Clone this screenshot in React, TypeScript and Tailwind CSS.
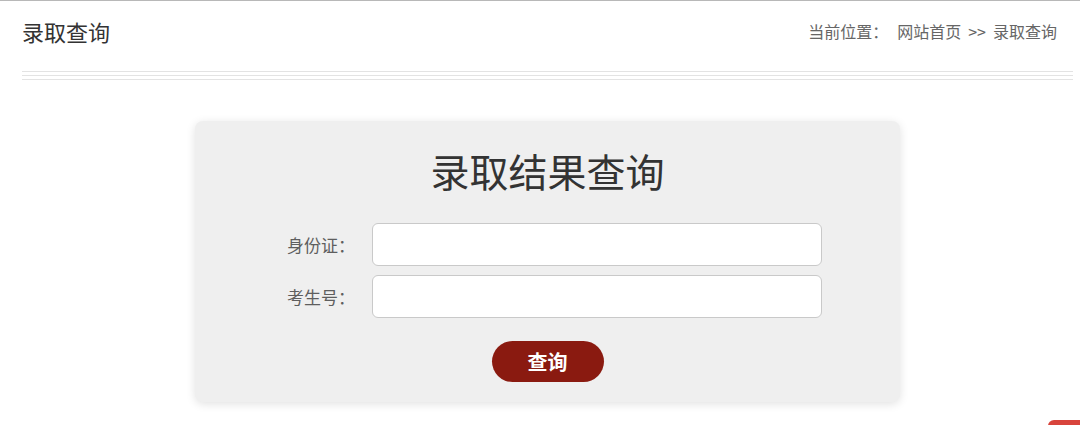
const font = { fontFamily: '"Noto Sans CJK SC", "Noto Sans", sans-serif' };

const Field = ({ label }: { label: string }) => (
  <div className="flex w-full items-center">
    <label className="w-[160px] text-right text-[17px] text-[#5e5e5e]">{label}</label>
    <input
      className="ml-[17px] h-[43px] w-[450px] rounded-[6px] border border-[#c9c9c9] bg-white px-3 outline-none"
      type="text"
    />
  </div>
);

export default function App() {
  return (
    <div
      className="relative h-[425px] w-[1080px] overflow-hidden border-t border-[#b8b8b8] bg-white"
      style={font}
    >
      <div className="ml-[22px] mr-[7px]">
        <div className="flex h-[70px] items-center justify-between pb-[10px]">
          <h1 className="text-[22px] text-[#333]">录取查询</h1>
          <div className="mr-[16px] flex text-[16px] text-[#666]">
            <span>当前位置：</span>
            <span className="ml-[9px]">网站首页</span>
            <span className="mx-[7px]">&gt;&gt;</span>
            <span>录取查询</span>
          </div>
        </div>

        <div className="flex flex-col gap-[3px]">
          <div className="h-px bg-[#e3e3e3]" />
          <div className="h-px bg-[#e3e3e3]" />
          <div className="h-px bg-[#e3e3e3]" />
        </div>

        <div className="mt-[41px] flex justify-center">
          <form
            className="flex h-[281px] w-[705px] flex-col items-center rounded-[8px] bg-[#efefef] pt-[25px] shadow-[0_2px_10px_rgba(0,0,0,0.12)]"
            onSubmit={(e) => e.preventDefault()}
          >
            <h2 className="text-[39px] leading-[48px] text-[#333]">录取结果查询</h2>
            <div className="mt-[29px] flex w-full flex-col gap-[9px]">
              <Field label="身份证：" />
              <Field label="考生号：" />
            </div>
            <button className="mt-[23px] h-[41px] w-[112px] rounded-full bg-[#8a1a10] text-[20px] font-bold text-white">
              查询
            </button>
          </form>
        </div>
      </div>

      <div className="absolute right-0 top-[419px] h-[20px] w-[32px] rounded-tl-[6px] bg-[#d8443c]" />
    </div>
  );
}
